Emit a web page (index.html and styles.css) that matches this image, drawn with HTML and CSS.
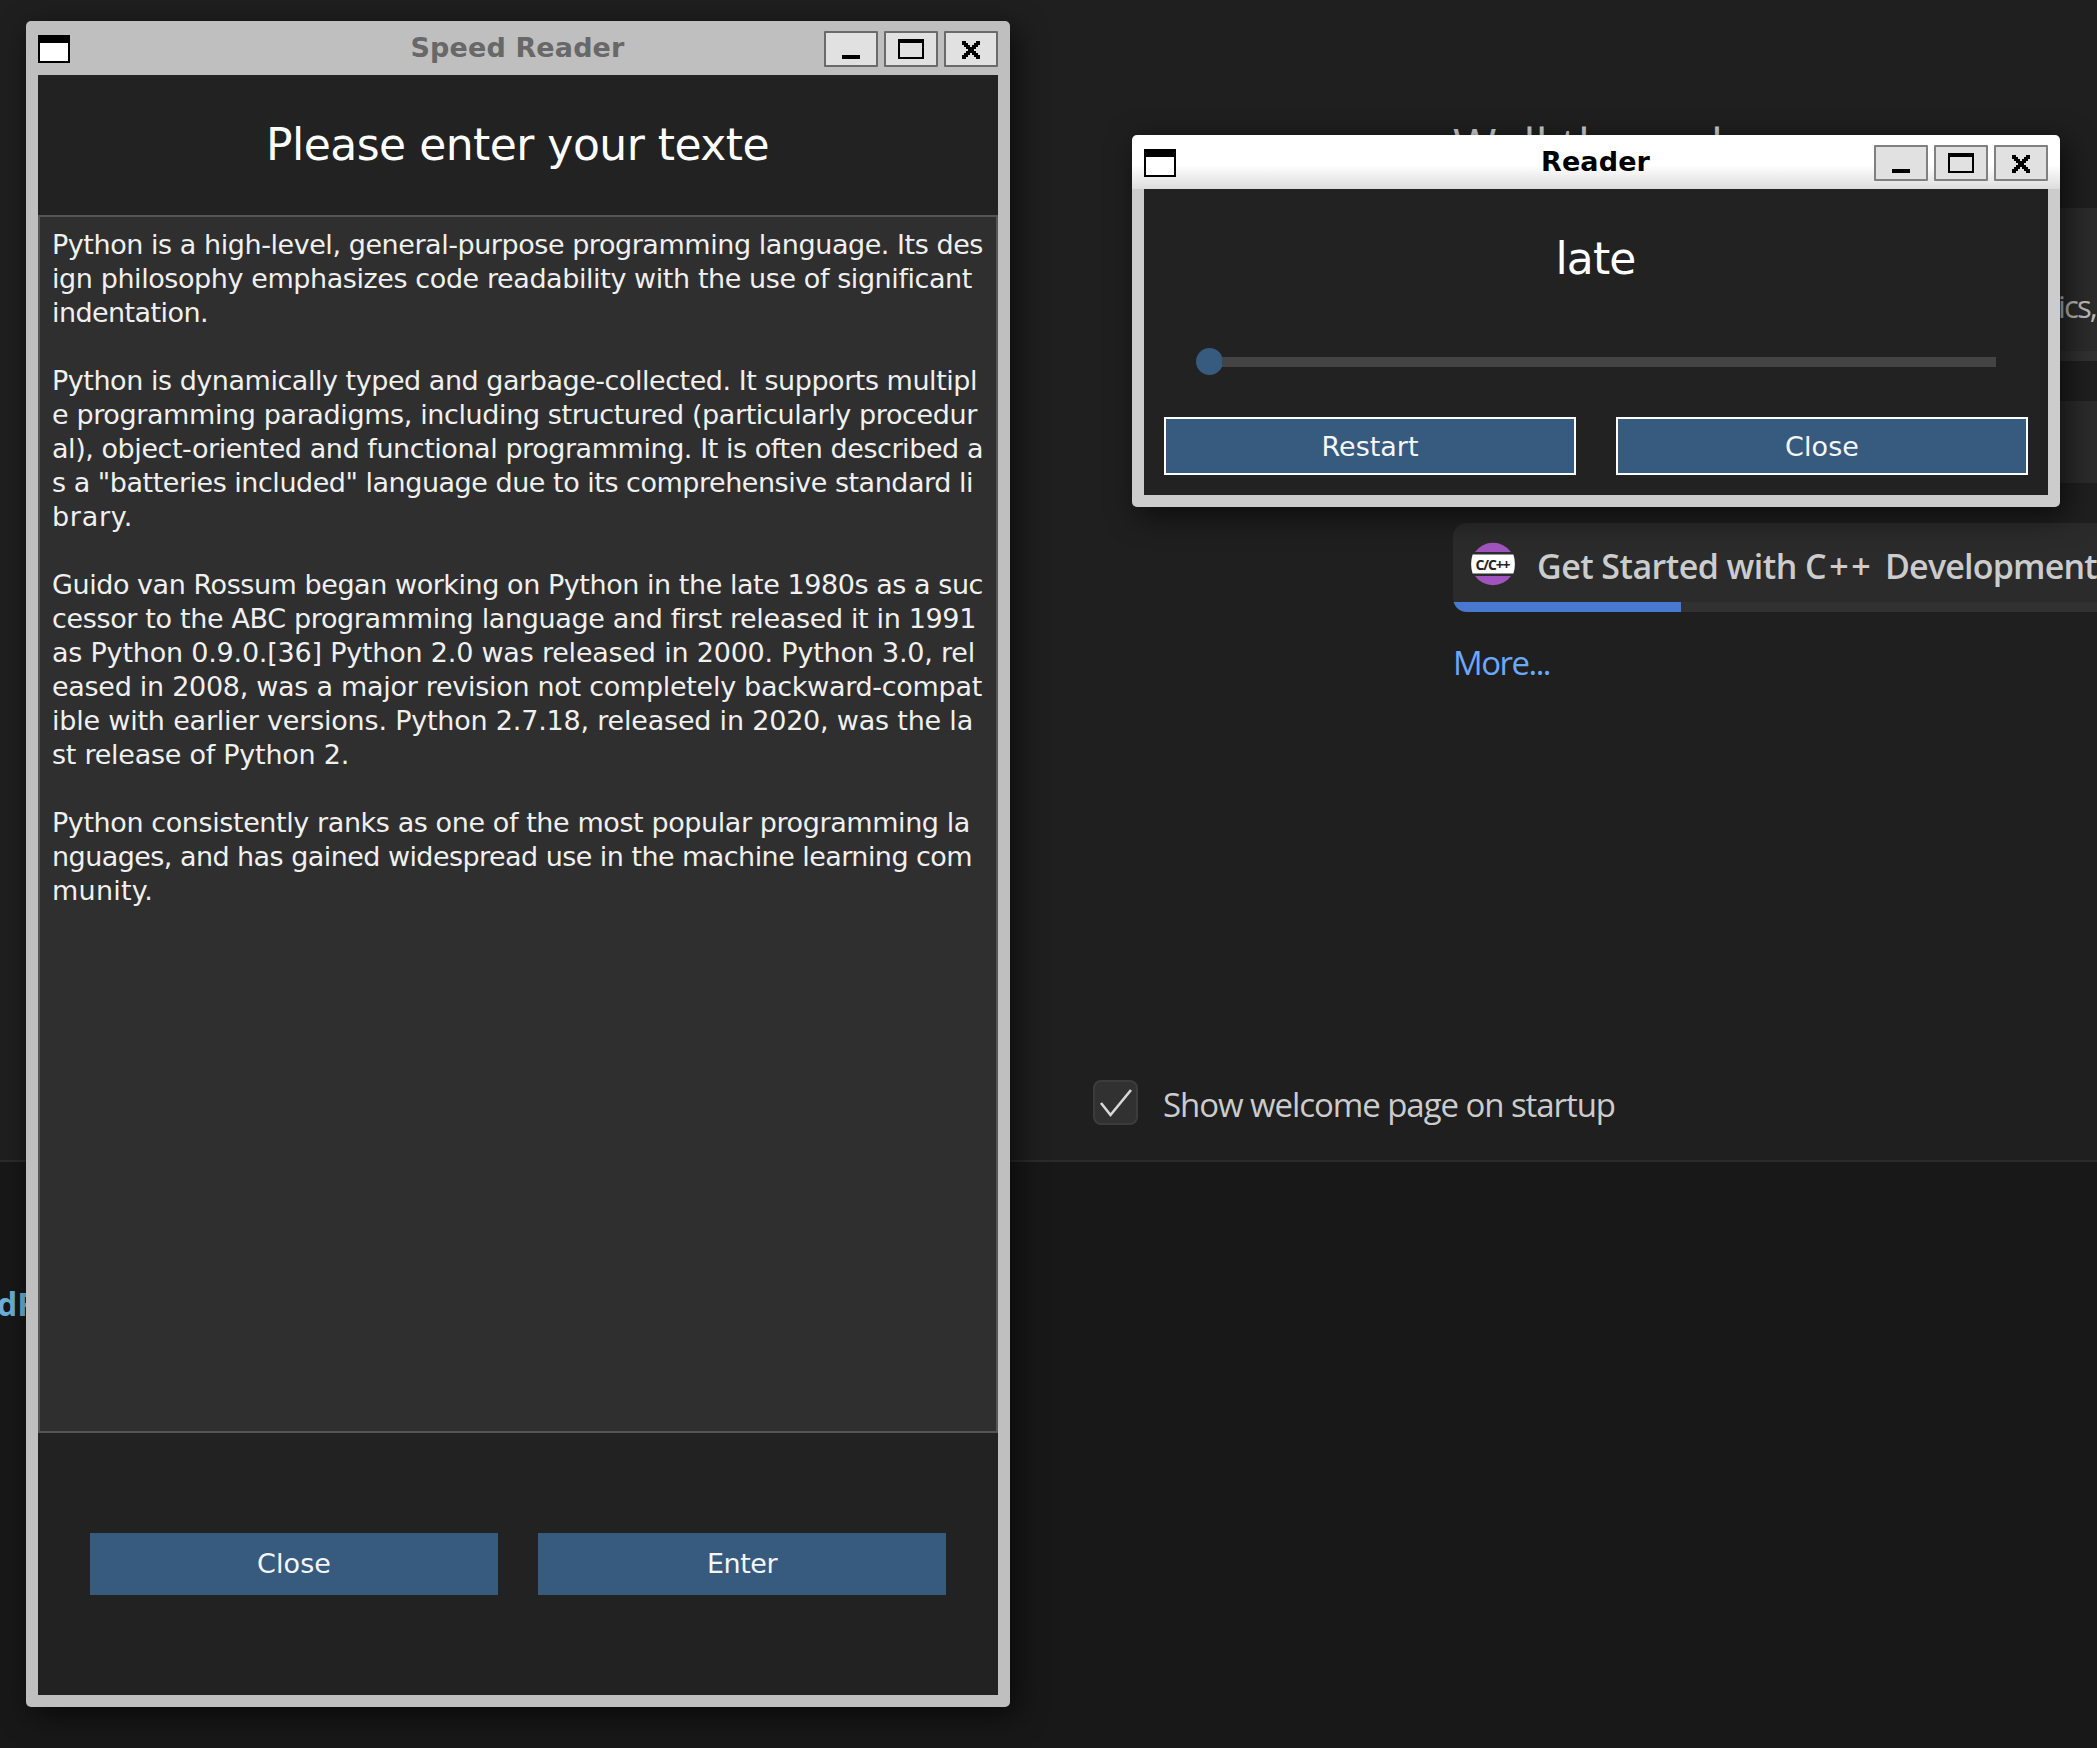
FILE: index.html
```html
<!DOCTYPE html>
<html lang="en">
<head>
<meta charset="utf-8">
<title>Speed Reader</title>
<link rel="stylesheet" href="styles.css">
</head>
<body>
<div class="desktop">
  <main class="editor">
    <section class="walkthroughs">
      <h2 class="walk-title"><span data-w="310">Walkthroughs</span></h2>
      <div class="card card-tall"><p class="card-desc"><span data-w="38">ics,</span></p><div class="progress"></div></div>
      <div class="card card-plain"></div>
      <div class="card card-cpp">
        <div class="card-head">
          <svg class="cpp-icon" width="44" height="44" viewBox="0 0 44 44">
            <path d="M4 10a22 22 0 0 1 36 0zM4 34a22 22 0 0 0 36 0z" fill="#a054be"/>
            <path d="M1.6 12.5h40.8q3 9.500 0 19H1.600q-3-9.500 0-19z" fill="#fff"/>
            <text x="22" y="27.500" text-anchor="middle" textLength="35" class="cpp-label">C/C++</text>
          </svg>
          <span class="card-name"><span data-w="268">Get Started with </span><span data-w="80">C++ </span><span data-w="212">Development</span></span>
        </div>
        <div class="progress"><div class="progress-fill"></div></div>
      </div>
      <a class="more"><span data-w="97">More...</span></a>
    </section>
    <label class="startup">
      <span class="checkbox"><svg width="41" height="41" viewBox="0 0 41 41"><path d="M6 21l9.500 12L36 8" fill="none" stroke="#d8d8d8" stroke-width="2.600"/></svg></span>
      <span class="startup-text" data-w="452">Show welcome page on startup</span>
    </label>
  </main>
  <section class="terminal"><span class="prompt">dR</span></section>

  <div class="window window-main">
    <header class="titlebar">
      <i class="app-icon"></i><span class="title"><span data-w="214">Speed Reader</span></span>
      <div class="controls">
        <b class="ctl"><svg width="50" height="32"><path d="M16 22h18v4H16z"/></svg></b>
        <b class="ctl"><svg width="50" height="32"><path fill-rule="evenodd" d="M12 6h26v20H12zM14 10v14h22V10z"/></svg></b>
        <b class="ctl"><svg width="50" height="32"><path d="M16 8h4v2h2v2h2v2h2v-2h2v-2h2V8h4v4h-2v2h-2v2h-2v2h2v2h2v2h2v4h-4v-2h-2v-2h-2v-2h-2v2h-2v2h-2v2h-4v-4h2v-2h2v-2h2v-2h-2v-2h-2v-2h-2z"/></svg></b>
      </div>
    </header>
    <div class="client">
      <h1 class="heading"><span data-w="503">Please enter your texte</span></h1>
      <div class="textarea">
        <div><span data-w="931">Python is a high-level, general-purpose programming language. Its des</span></div>
        <div><span data-w="920">ign philosophy emphasizes code readability with the use of significant</span></div>
        <div><span data-w="156">indentation.</span></div>
        <div class="blank"></div>
        <div><span data-w="925">Python is dynamically typed and garbage-collected. It supports multipl</span></div>
        <div><span data-w="925">e programming paradigms, including structured (particularly procedur</span></div>
        <div><span data-w="931">al), object-oriented and functional programming. It is often described a</span></div>
        <div><span data-w="921">s a "batteries included" language due to its comprehensive standard li</span></div>
        <div><span data-w="81">brary.</span></div>
        <div class="blank"></div>
        <div><span data-w="931">Guido van Rossum began working on Python in the late 1980s as a suc</span></div>
        <div><span data-w="924">cessor to the ABC programming language and first released it in 1991</span></div>
        <div><span data-w="923">as Python 0.9.0.[36] Python 2.0 was released in 2000. Python 3.0, rel</span></div>
        <div><span data-w="930">eased in 2008, was a major revision not completely backward-compat</span></div>
        <div><span data-w="921">ible with earlier versions. Python 2.7.18, released in 2020, was the la</span></div>
        <div><span data-w="297">st release of Python 2.</span></div>
        <div class="blank"></div>
        <div><span data-w="918">Python consistently ranks as one of the most popular programming la</span></div>
        <div><span data-w="920">nguages, and has gained widespread use in the machine learning com</span></div>
        <div><span data-w="101">munity.</span></div>
      </div>
      <div class="actions"><button class="btn"><span data-w="74">Close</span></button><button class="btn"><span data-w="70">Enter</span></button></div>
    </div>
  </div>

  <div class="window window-reader">
    <header class="titlebar">
      <i class="app-icon"></i><span class="title"><span data-w="109">Reader</span></span>
      <div class="controls">
        <b class="ctl"><svg width="50" height="32"><path d="M16 22h18v4H16z"/></svg></b>
        <b class="ctl"><svg width="50" height="32"><path fill-rule="evenodd" d="M12 6h26v20H12zM14 10v14h22V10z"/></svg></b>
        <b class="ctl"><svg width="50" height="32"><path d="M16 8h4v2h2v2h2v2h2v-2h2v-2h2V8h4v4h-2v2h-2v2h-2v2h2v2h2v2h2v4h-4v-2h-2v-2h-2v-2h-2v2h-2v2h-2v2h-4v-4h2v-2h2v-2h2v-2h-2v-2h-2v-2h-2z"/></svg></b>
      </div>
    </header>
    <div class="client">
      <div class="heading"><span data-w="80">late</span></div>
      <div class="slider"><i class="knob"></i><i class="track"></i></div>
      <div class="actions"><button class="btn"><span data-w="97">Restart</span></button><button class="btn"><span data-w="74">Close</span></button></div>
    </div>
  </div>
</div>
<script src="fit.js"></script>
</body>
</html>
```
FILE: styles.css
```css
* { box-sizing: border-box; }
body { margin: 0; background: #181818; overflow: hidden; }
h1, h2, p { margin: 0; font-weight: 400; }
span { white-space: pre; }

.desktop { position: relative; width: 2097px; height: 1748px; overflow: hidden; }

/* Editor behind the windows */
.editor {
  height: 1162px; padding: 115px 0 0 1093px;
  background: #1f1f1f; border-bottom: 2px solid #2b2b2b;
  font-family: "Open Sans", "Noto Sans", sans-serif; color: #ccc;
}
.walkthroughs { width: 700px; height: 965px; margin-left: 360px; display: flex; flex-direction: column; }
.walk-title { height: 60px; margin-bottom: 33px; font-size: 47px; line-height: 60px; }
.card { display: flex; flex-direction: column; flex: none; border-radius: 14px; background: #2b2b2b; overflow: hidden; margin-bottom: 40px; }
.card-tall { height: 153px; }
.card-desc { flex: 1; padding: 78px 0 0 605px; font-size: 31px; line-height: 40px; color: #bdbdbd; }
.card-plain { height: 82px; }
.card-cpp { height: 89px; margin-bottom: 31px; }
.card-head { height: 79px; padding-left: 18px; display: flex; align-items: center; gap: 22px; }
.cpp-icon { flex: none; margin-top: 3px; }
.cpp-label { font: bold 14px "Open Sans", sans-serif; fill: #222; }
.card-name { padding-top: 6px; font-size: 34px; line-height: 42px; font-weight: 600; }
.progress { height: 10px; flex: none; background: #313131; }
.progress-fill { width: 228px; height: 10px; background: #4878cf; }
.more { font-size: 33px; line-height: 40px; color: #6ba8ff; }
.startup { display: flex; align-items: center; gap: 25px; height: 45px; font-size: 33px; line-height: 45px; }
.startup-text { padding-top: 3px; }
.checkbox { width: 45px; height: 45px; border: 2px solid #3c3c3c; border-radius: 8px; background: #313131; }
.checkbox svg { display: block; }

.terminal { height: 585px; padding-top: 122px; background: #181818; font-family: "Open Sans", sans-serif; }
.prompt { display: block; margin-left: -3px; font-size: 32px; line-height: 40px; font-weight: 700; color: #6cb2d6; }

/* Floating windows */
.window {
  position: absolute; display: flex; flex-direction: column;
  padding: 0 12px 12px; border-radius: 5px;
  font: 27px "DejaVu Sans", sans-serif; color: #fff;
  box-shadow: 6px 8px 30px rgba(0, 0, 0, .65);
}
.window-main { left: 26px; top: 21px; width: 984px; height: 1686px; background: #bfbfbf; }
.window-reader {
  left: 1132px; top: 135px; width: 928px; height: 372px;
  background: linear-gradient(#fff 0, #fff 30px, #ddd 54px, #ccc 54px);
}
.titlebar { display: flex; align-items: center; height: 54px; flex: none; }
.app-icon { width: 32px; height: 28px; border: 2px solid #000; border-top-width: 8px; background: #fff; margin-top: 2px; }
.title { flex: 1; padding-left: 141px; text-align: center; font-weight: 700; line-height: 54px; height: 54px; color: #686868; }
.window-reader .title { color: #000; }
.controls { display: flex; gap: 6px; margin-top: 2px; }
.ctl { width: 54px; height: 36px; border: 2px solid #6a6a6a; border-radius: 1px; background: #e1e1e1; }
.window-reader .ctl { border-color: #808080; }
.ctl svg { display: block; }
.client { flex: 1; background: #222; display: flex; flex-direction: column; }
.heading { height: 140px; flex: none; padding-right: 1px; text-align: center; font-size: 44px; line-height: 139px; }
.textarea { height: 1218px; flex: none; padding: 11px 0 0 12px; border: 2px solid #555; background: #2f2f2f; line-height: 34px; color: #f0f0f0; }
.blank { height: 34px; }
.actions { display: flex; gap: 40px; }
.btn { flex: 1; height: 62px; margin: 0; padding: 0 0 2px; border: 0; background: #375a7f; color: #f4f6f8; font: inherit; text-align: center; }
.window-main .actions { padding: 100px 52px 0; }
.window-reader .actions { padding: 41px 20px 0; }
.window-reader .btn { height: 58px; border: 2px solid #fff; padding: 0; }
.window-reader .heading { height: 160px; }
.slider { display: flex; align-items: center; height: 27px; margin: -1px 0 1px; padding: 0 52px; }
.knob { width: 27px; height: 27px; border-radius: 50%; background: #375a7f; }
.track { flex: 1; height: 10px; margin-left: -1px; background: #444; }
```
FILE: fit.js
```js
// Tracks each marked run of text out to its set width.
document.querySelectorAll("[data-w]").forEach(function (el) {
  var range = document.createRange();
  range.selectNodeContents(el);
  var natural = range.getBoundingClientRect().width;
  el.style.letterSpacing = (el.dataset.w - natural) / el.textContent.length + "px";
});
```
